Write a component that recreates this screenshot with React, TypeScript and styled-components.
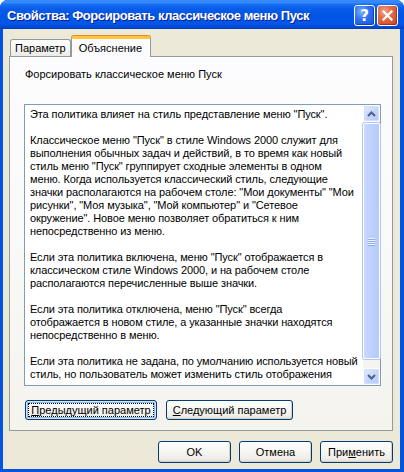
import React from 'react';
import styled, {createGlobalStyle} from 'styled-components';

const GlobalStyle = createGlobalStyle`
  html, body {
    margin: 0;
    padding: 0;
    background: #ffffff;
  }
`;

const UI_FONT = `"Liberation Sans", Arial, sans-serif`;

const explanation: string[][] = [
    ['Эта политика влияет на стиль представление меню "Пуск".'],
    [
        'Классическое меню "Пуск" в стиле Windows 2000 служит для',
        'выполнения обычных задач и действий, в то время как новый',
        'стиль меню "Пуск" группирует сходные элементы в одном',
        'меню. Когда используется классический стиль, следующие',
        'значки располагаются на рабочем столе: "Мои документы" "Мои',
        'рисунки", "Моя музыка", "Мой компьютер" и "Сетевое',
        'окружение". Новое меню позволяет обратиться к ним',
        'непосредственно из меню.',
    ],
    [
        'Если эта политика включена, меню "Пуск" отображается в',
        'классическом стиле Windows 2000, и на рабочем столе',
        'располагаются перечисленные выше значки.',
    ],
    [
        'Если эта политика отключена, меню "Пуск" всегда',
        'отображается в новом стиле, а указанные значки находятся',
        'непосредственно в меню.',
    ],
    [
        'Если эта политика не задана, по умолчанию используется новый',
        'стиль, но пользователь может изменить стиль отображения',
    ],
];

export default function App() {
    return (
        <>
            <GlobalStyle/>
            <Window>
                <TitleBar>
                    <Title>Свойства: Форсировать классическое меню Пуск</Title>
                    <CaptionButtons>
                        <CaptionButton $kind="help">?</CaptionButton>
                        <CaptionButton $kind="close">
                            <svg width="11" height="11" viewBox="0 0 11 11">
                                <path d="M1.5 1.5 L9.5 9.5 M9.5 1.5 L1.5 9.5" stroke="#fff" strokeWidth="2.2"
                                      strokeLinecap="square"/>
                            </svg>
                        </CaptionButton>
                    </CaptionButtons>
                </TitleBar>
                <Body>
                    <TabRow>
                        <Tab>Параметр</Tab>
                        <Tab $active>Объяснение</Tab>
                    </TabRow>
                    <Panel>
                        <Heading>Форсировать классическое меню Пуск</Heading>
                        <TextBox>
                            <TextArea>
                                {explanation.map((para, i) => (
                                    <Paragraph key={i}>
                                        {para.map((line, j) => <Line key={j}>{line}</Line>)}
                                    </Paragraph>
                                ))}
                            </TextArea>
                            <ScrollBar>
                                <ScrollArrow>
                                    <svg width="9" height="6" viewBox="0 0 9 6">
                                        <path d="M1 5 L4.5 1.5 L8 5" fill="none" stroke="#4d6185" strokeWidth="2"/>
                                    </svg>
                                </ScrollArrow>
                                <Track>
                                    <Thumb>
                                        <Grip/>
                                        <Grip/>
                                        <Grip/>
                                        <Grip/>
                                    </Thumb>
                                </Track>
                                <ScrollArrow>
                                    <svg width="9" height="6" viewBox="0 0 9 6">
                                        <path d="M1 1 L4.5 4.5 L8 1" fill="none" stroke="#4d6185" strokeWidth="2"/>
                                    </svg>
                                </ScrollArrow>
                            </ScrollBar>
                        </TextBox>
                        <NavRow>
                            <Button $w={132} $h={20} $focused><u>П</u>редыдущий параметр</Button>
                            <Button $w={127} $h={20}><u>С</u>ледующий параметр</Button>
                        </NavRow>
                    </Panel>
                    <DialogButtons>
                        <Button $w={73} $h={22}>OK</Button>
                        <Button $w={73} $h={22}>Отмена</Button>
                        <Button $w={73} $h={22}>При<u>м</u>енить</Button>
                    </DialogButtons>
                </Body>
            </Window>
        </>
    );
}

const Window = styled.div`
  width: 404px;
  height: 472px;
  display: flex;
  flex-direction: column;
  border-radius: 8px 8px 0 0;
  overflow: hidden;
  background: #0553e1;
  font-family: ${UI_FONT};
`;

const TitleBar = styled.div`
  height: 29px;
  flex: none;
  display: flex;
  align-items: center;
  justify-content: space-between;
  padding: 0 6px 0 7px;
  background: linear-gradient(180deg,
  #0a5fe8 0%, #3d95ff 7%, #1b6ff5 14%, #0a5ce9 30%,
  #0055e5 55%, #0257ea 80%, #0048d6 93%, #003cb8 100%);
  box-shadow: inset 0 1px 0 #3b8bff;
`;

const Title = styled.div`
  color: #ffffff;
  font-family: ${UI_FONT};
  font-weight: bold;
  font-size: 13px;
  letter-spacing: -0.45px;
  text-shadow: 1px 1px 0 #0a1f8f;
  white-space: nowrap;
  margin-top: 1px;
`;

const CaptionButtons = styled.div`
  display: flex;
  gap: 2px;
  margin-top: 2px;
`;

const CaptionButton = styled.div<{ $kind: 'help' | 'close' }>`
  width: 19px;
  height: 19px;
  border: 1px solid #ffffff;
  border-radius: 3px;
  display: flex;
  align-items: center;
  justify-content: center;
  color: #ffffff;
  font-family: "DejaVu Sans", sans-serif;
  font-weight: bold;
  font-size: 15px;
  background: ${p => p.$kind === 'close'
          ? 'radial-gradient(circle at 35% 30%, #f0a58a 0%, #e46a45 40%, #d1411f 100%)'
          : 'radial-gradient(circle at 35% 30%, #7fb0ff 0%, #2f6ff2 45%, #1a55dc 100%)'};
  box-shadow: inset -1px -1px 1px rgba(0, 0, 60, 0.35);
`;

const Body = styled.div`
  flex: 1;
  display: flex;
  flex-direction: column;
  margin: 0 4px 3px 3px;
  padding: 7px 7px 0 6px;
  background: #ece9d8;
`;

const TabRow = styled.div`
  display: flex;
  align-items: flex-end;
  height: 21px;
  padding-left: 1px;
  margin-bottom: -1px;
  position: relative;
  z-index: 1;
`;

const Tab = styled.div<{ $active?: boolean }>`
  box-sizing: border-box;
  height: ${p => p.$active ? 21 : 17}px;
  margin-bottom: ${p => p.$active ? 0 : 1}px;
  padding: ${p => p.$active ? '3px 8px 0 7px' : '2px 4px 0 4px'};
  font-size: 11px;
  color: #000;
  border: 1px solid #919b9c;
  border-bottom: none;
  border-top: ${p => p.$active ? '3px solid #ffc83c' : '1px solid #919b9c'};
  border-radius: 3px 3px 0 0;
  background: ${p => p.$active
          ? '#fcfcfe'
          : 'linear-gradient(180deg, #ffffff 0%, #f3f3ef 70%, #ebeae4 100%)'};
  box-shadow: ${p => p.$active ? '0 -1px 0 #e68b2c' : 'none'};
  white-space: nowrap;
`;

const Panel = styled.div`
  box-sizing: border-box;
  height: 375px;
  display: flex;
  flex-direction: column;
  padding: 11px 11px 0 14px;
  border: 1px solid #919b9c;
  background: linear-gradient(180deg, #fcfcfe 0%, #f9f9f7 50%, #f4f3ee 100%);
`;

const Heading = styled.div`
  font-size: 11px;
  line-height: 13px;
  padding-left: 1px;
  color: #000;
`;

const TextBox = styled.div`
  box-sizing: border-box;
  width: 357px;
  height: 282px;
  margin-top: 23px;
  display: flex;
  border: 1px solid #7f9db9;
  background: #ffffff;
`;

const TextArea = styled.div`
  flex: 1;
  overflow: hidden;
  padding: 3px 0 0 5px;
  font-size: 11px;
  line-height: 13px;
  letter-spacing: -0.1px;
  color: #000;
`;

const Paragraph = styled.div`
  margin-bottom: 13px;
`;

const Line = styled.div`
  white-space: nowrap;
`;

const ScrollBar = styled.div`
  width: 17px;
  display: flex;
  flex-direction: column;
  background: #f5f4ef;
`;

const ScrollArrow = styled.div`
  box-sizing: border-box;
  height: 17px;
  flex: none;
  display: flex;
  align-items: center;
  justify-content: center;
  border: 1px solid #ffffff;
  border-radius: 2px;
  background: linear-gradient(135deg, #e4ecfe 0%, #c6d6fc 50%, #b4c8f6 100%);
  box-shadow: inset 0 0 0 1px #d2defc;
`;

const Track = styled.div`
  flex: 1;
  display: flex;
  flex-direction: column;
  padding: 1px 0 9px;
`;

const Thumb = styled.div`
  box-sizing: border-box;
  flex: 1;
  display: flex;
  flex-direction: column;
  align-items: center;
  justify-content: center;
  gap: 1px;
  border: 1px solid #ffffff;
  border-radius: 2px;
  background: linear-gradient(90deg, #c9d8fd 0%, #bed0fb 50%, #b6cafa 100%);
  box-shadow: 0 0 0 1px #b1c6f7;
`;

const Grip = styled.div`
  width: 7px;
  height: 1px;
  background: #eef3ff;
  box-shadow: 0 1px 0 #8caaee;
`;

const NavRow = styled.div`
  display: flex;
  gap: 9px;
  margin-top: 14px;
  padding-left: 1px;
`;

const DialogButtons = styled.div`
  display: flex;
  justify-content: flex-end;
  gap: 8px;
  margin-top: 10px;
`;

const Button = styled.button<{ $w: number; $h: number; $focused?: boolean }>`
  position: relative;
  box-sizing: border-box;
  width: ${p => p.$w}px;
  height: ${p => p.$h}px;
  padding: 0;
  font-family: ${UI_FONT};
  font-size: 11px;
  color: #000;
  border: 1px solid #003c74;
  border-radius: 3px;
  background: linear-gradient(180deg, #ffffff 0%, #f6f6f3 45%, #efeee9 80%, #e3e0d6 100%);
  box-shadow: ${p => p.$focused
          ? 'inset 0 0 0 1px #cee7ff, inset 0 0 0 2px #98b8ea'
          : 'inset -1px -1px 0 #d6d0c5'};
  white-space: nowrap;

  &::after {
    content: '';
    display: ${p => p.$focused ? 'block' : 'none'};
    position: absolute;
    inset: 2px;
    border: 1px dotted #000;
  }

  u {
    text-decoration: underline;
  }
`;
